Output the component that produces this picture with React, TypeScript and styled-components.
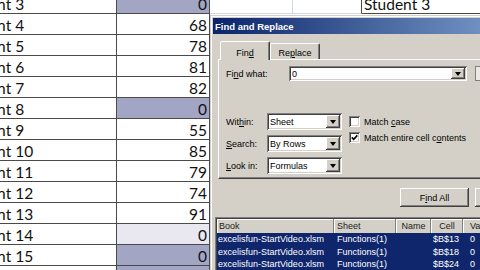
import { Fragment } from "react";
import styled, { createGlobalStyle } from "styled-components";

const GlobalStyle = createGlobalStyle`
  html, body {
    margin: 0;
    padding: 0;
    background: #ffffff;
    overflow: hidden;
  }
`;

const Screen = styled.div`
  position: relative;
  width: 480px;
  height: 270px;
  overflow: hidden;
  background: #ffffff;
`;

/* ---------- worksheet behind the dialog ---------- */

const Sheet = styled.div`
  display: grid;
  grid-template-columns: 161px 93px 83px 69px 200px;
  grid-auto-rows: 21px;
  margin: -7px 0 0 -44px;
  font-family: Lato, "Open Sans", sans-serif;
  font-size: 15.5px;
  color: #111111;
`;

type Rule = "dark" | "light" | "none";
type Tone = "plain" | "found" | "active";

const ruleColor: Record<Rule, string> = {
  dark: "#4a4a4a",
  light: "#d0d7e5",
  none: "transparent",
};

const toneColor: Record<Tone, string> = {
  plain: "#ffffff",
  found: "#a3a5c4",
  active: "#e9e8f0",
};

const SheetCell = styled.div<{ $tone?: Tone; $align?: "left" | "right"; $right?: Rule; $bottom?: Rule }>`
  box-sizing: border-box;
  padding: 1px 2px 0;
  line-height: 20px;
  white-space: nowrap;
  overflow: hidden;
  text-align: ${(p) => p.$align ?? "left"};
  background: ${(p) => toneColor[p.$tone ?? "plain"]};
  border-right: 1px solid ${(p) => ruleColor[p.$right ?? "none"]};
  border-bottom: 1px solid ${(p) => ruleColor[p.$bottom ?? "none"]};
`;

/* ---------- Find and Replace dialog ---------- */

const Dialog = styled.div`
  position: absolute;
  left: 210px;
  top: 15px;
  width: 417px;
  height: 300px;
  box-sizing: border-box;
  padding: 2px;
  background: #d4d0c8;
  border: 1px solid;
  border-color: #d4d0c8 #404040 #404040 #d4d0c8;
  box-shadow: inset 1px 1px 0 #ffffff, inset -1px -1px 0 #808080;
  font-family: "Liberation Sans", Arial, sans-serif;
  font-size: 9px;
  color: #000000;
`;

const TitleBar = styled.div`
  height: 16px;
  display: flex;
  align-items: center;
  padding-left: 2px;
  background: linear-gradient(to right, #0a246a, #a6caf0);
  color: #ffffff;
  font-weight: bold;
  font-size: 9.5px;
`;

const Body = styled.div`
  display: flex;
  flex-direction: column;
  padding: 7px 5px 0 2px;
`;

const TabStrip = styled.div`
  position: relative;
  z-index: 1;
  display: flex;
  align-items: flex-end;
  height: 18px;
  margin-left: 3px;
  padding-left: 2px;
`;

const Tab = styled.div<{ $active?: boolean }>`
  box-sizing: border-box;
  width: 50px;
  height: ${(p) => (p.$active ? 19 : 16)}px;
  margin-bottom: ${(p) => (p.$active ? -1 : 0)}px;
  padding-top: ${(p) => (p.$active ? 6 : 4)}px;
  line-height: 10px;
  text-align: center;
  background: #d4d0c8;
  border: 1px solid;
  border-bottom: none;
  border-color: #ffffff #404040 transparent #ffffff;
  border-radius: 2px 2px 0 0;
  box-shadow: inset -1px 0 0 #808080;
`;

const Pane = styled.div`
  box-sizing: border-box;
  height: 120px;
  margin-left: 3px;
  padding: 6px 0 0 7px;
  background: #d4d0c8;
  border: 1px solid;
  border-color: #ffffff #404040 #404040 #ffffff;
  box-shadow: inset -1px -1px 0 #808080;
`;

const FieldRow = styled.div<{ $height: number }>`
  display: flex;
  align-items: center;
  height: ${(p) => p.$height}px;
`;

const FieldLabel = styled.div<{ $width: number }>`
  flex-shrink: 0;
  width: ${(p) => p.$width}px;
  white-space: nowrap;
`;

const Key = styled.span`
  text-decoration: underline;
`;

const Combo = styled.div<{ $width: number; $height: number }>`
  box-sizing: border-box;
  flex-shrink: 0;
  display: flex;
  width: ${(p) => p.$width}px;
  height: ${(p) => p.$height}px;
  padding: 2px;
  background: #ffffff;
  box-shadow: inset 1px 1px 0 #808080, inset -1px -1px 0 #ffffff,
    inset 2px 2px 0 #404040, inset -2px -2px 0 #d4d0c8;
`;

const ComboText = styled.div`
  flex: 1;
  display: flex;
  align-items: center;
  padding-left: 1px;
  white-space: nowrap;
  overflow: hidden;
`;

const DropButton = styled.div`
  box-sizing: border-box;
  display: flex;
  align-items: center;
  justify-content: center;
  width: 14px;
  background: #d4d0c8;
  box-shadow: inset -1px -1px 0 #404040, inset 1px 1px 0 #ffffff,
    inset -2px -2px 0 #808080;

  &::after {
    content: "";
    width: 0;
    height: 0;
    border-left: 3.5px solid transparent;
    border-right: 3.5px solid transparent;
    border-top: 4px solid #000000;
  }
`;

const FormatBox = styled.div`
  flex-shrink: 0;
  box-sizing: border-box;
  width: 80px;
  height: 15px;
  margin-left: 8px;
  background: #ece9e2;
  border: 1px solid #808080;
`;

const Options = styled.div`
  display: flex;
  margin-top: 32px;
`;

const SelectColumn = styled.div`
  display: flex;
  flex-direction: column;
  gap: 5px;
`;

const CheckColumn = styled.div`
  display: flex;
  flex-direction: column;
  gap: 5px;
  padding-top: 3px;
  margin-left: 7px;
`;

const CheckRow = styled.div`
  display: flex;
  align-items: center;
  gap: 4px;
  height: 11px;
  white-space: nowrap;
`;

const CheckBox = styled.div`
  box-sizing: border-box;
  display: flex;
  align-items: center;
  justify-content: center;
  width: 11px;
  height: 11px;
  background: #ffffff;
  box-shadow: inset 1px 1px 0 #808080, inset -1px -1px 0 #ffffff,
    inset 2px 2px 0 #404040, inset -2px -2px 0 #d4d0c8;
`;

const ButtonRow = styled.div`
  display: flex;
  justify-content: flex-end;
  gap: 6px;
  margin-top: 9px;
`;

const PushButton = styled.div`
  box-sizing: border-box;
  width: 69px;
  height: 19px;
  display: flex;
  align-items: center;
  justify-content: center;
  background: #d4d0c8;
  box-shadow: inset -1px -1px 0 #404040, inset 1px 1px 0 #ffffff,
    inset -2px -2px 0 #808080;
`;

const ResultList = styled.div`
  display: grid;
  grid-template-columns: 117px 62px 35px 32px 80px;
  grid-template-rows: 14px repeat(3, 12.5px);
  height: 80px;
  margin-top: 10px;
  padding: 2px 0 0 2px;
  background: #ffffff;
  box-shadow: inset 1px 1px 0 #808080, inset 2px 2px 0 #404040;
`;

const HeaderCell = styled.div<{ $align?: "left" | "center"; $pad?: number }>`
  padding-left: ${(p) => p.$pad ?? 3}px;
  line-height: 14px;
  text-align: ${(p) => p.$align ?? "left"};
  white-space: nowrap;
  overflow: hidden;
  color: #222222;
  background: #d4d0c8;
  box-shadow: inset -1px 0 0 #808080, inset 1px 1px 0 #ffffff;
`;

const ResultCell = styled.div<{ $pad?: number }>`
  padding-left: ${(p) => p.$pad ?? 3}px;
  line-height: 12.5px;
  white-space: nowrap;
  overflow: hidden;
  color: #ffffff;
  background: #0f266c;
`;

/* ---------- data ---------- */

const scores: [string, number, Tone][] = [
  ["Student 3", 0, "found"],
  ["Student 4", 68, "plain"],
  ["Student 5", 78, "plain"],
  ["Student 6", 81, "plain"],
  ["Student 7", 82, "plain"],
  ["Student 8", 0, "found"],
  ["Student 9", 55, "plain"],
  ["Student 10", 85, "plain"],
  ["Student 11", 79, "plain"],
  ["Student 12", 74, "plain"],
  ["Student 13", 91, "plain"],
  ["Student 14", 0, "active"],
  ["Student 15", 0, "found"],
  ["Student 16", 0, "found"],
];

const results = ["$B$13", "$B$18", "$B$24"];

const App = () => {
  return (
    <>
      <GlobalStyle />
      <Screen>
        <Sheet>
          {scores.map(([name, score, tone], i) => (
            <Fragment key={name}>
              <SheetCell $right="dark" $bottom="dark">
                {name}
              </SheetCell>
              <SheetCell $tone={tone} $align="right" $right="dark" $bottom="dark">
                {score}
              </SheetCell>
              <SheetCell $right={i === 0 ? "light" : "none"} $bottom={i === 0 ? "light" : "none"} />
              <SheetCell $right={i === 0 ? "dark" : "none"} $bottom={i === 0 ? "light" : "none"} />
              <SheetCell $bottom={i === 0 ? "dark" : "none"}>{i === 0 ? "Student 3" : ""}</SheetCell>
            </Fragment>
          ))}
        </Sheet>

        <Dialog>
          <TitleBar>Find and Replace</TitleBar>
          <Body>
            <TabStrip>
              <Tab $active>
                Fin<Key>d</Key>
              </Tab>
              <Tab>
                Re<Key>p</Key>lace
              </Tab>
            </TabStrip>
            <Pane>
              <FieldRow $height={15}>
                <FieldLabel $width={63}>
                  Fi<Key>n</Key>d what:
                </FieldLabel>
                <Combo $width={178} $height={15}>
                  <ComboText>0</ComboText>
                  <DropButton />
                </Combo>
                <FormatBox />
              </FieldRow>

              <Options>
                <SelectColumn>
                  <FieldRow $height={17}>
                    <FieldLabel $width={41}>
                      Wit<Key>h</Key>in:
                    </FieldLabel>
                    <Combo $width={75} $height={17}>
                      <ComboText>Sheet</ComboText>
                      <DropButton />
                    </Combo>
                  </FieldRow>
                  <FieldRow $height={17}>
                    <FieldLabel $width={41}>
                      <Key>S</Key>earch:
                    </FieldLabel>
                    <Combo $width={75} $height={17}>
                      <ComboText>By Rows</ComboText>
                      <DropButton />
                    </Combo>
                  </FieldRow>
                  <FieldRow $height={17}>
                    <FieldLabel $width={41}>
                      <Key>L</Key>ook in:
                    </FieldLabel>
                    <Combo $width={75} $height={17}>
                      <ComboText>Formulas</ComboText>
                      <DropButton />
                    </Combo>
                  </FieldRow>
                </SelectColumn>

                <CheckColumn>
                  <CheckRow>
                    <CheckBox />
                    <span>
                      Match <Key>c</Key>ase
                    </span>
                  </CheckRow>
                  <CheckRow>
                    <CheckBox>
                      <svg width="7" height="7" viewBox="0 0 7 7">
                        <polyline points="0.8,3.4 2.7,5.3 6.3,1.4" fill="none" stroke="#000" strokeWidth="1.6" />
                      </svg>
                    </CheckBox>
                    <span>
                      Match entire cell c<Key>o</Key>ntents
                    </span>
                  </CheckRow>
                </CheckColumn>
              </Options>
            </Pane>

            <ButtonRow>
              <PushButton>
                F<Key>i</Key>nd All
              </PushButton>
              <PushButton>
                <Key>F</Key>ind Next
              </PushButton>
              <PushButton>Close</PushButton>
            </ButtonRow>

            <ResultList>
              <HeaderCell $pad={2}>Book</HeaderCell>
              <HeaderCell>Sheet</HeaderCell>
              <HeaderCell $align="center" $pad={0}>
                Name
              </HeaderCell>
              <HeaderCell $align="center" $pad={0}>
                Cell
              </HeaderCell>
              <HeaderCell $pad={7}>Value</HeaderCell>
              {results.map((cell) => (
                <Fragment key={cell}>
                  <ResultCell $pad={1}>excelisfun-StartVideo.xlsm</ResultCell>
                  <ResultCell>Functions(1)</ResultCell>
                  <ResultCell />
                  <ResultCell $pad={2}>{cell}</ResultCell>
                  <ResultCell $pad={7}>0</ResultCell>
                </Fragment>
              ))}
            </ResultList>
          </Body>
        </Dialog>
      </Screen>
    </>
  );
};

export default App;
